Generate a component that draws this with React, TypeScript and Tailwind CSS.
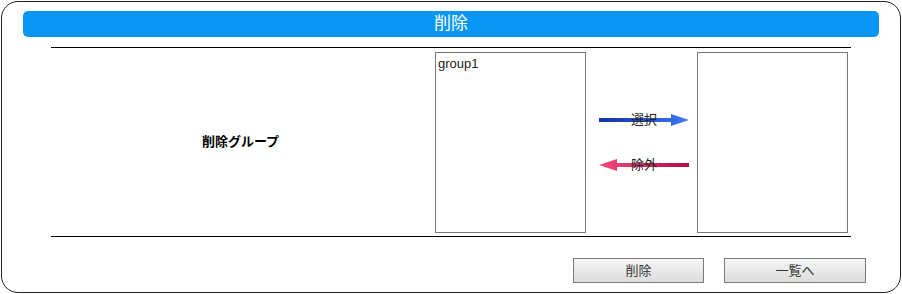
import React from 'react';

const jp = 'font-["Liberation_Sans","Noto_Sans_CJK_JP",sans-serif]';

// Horizontal arrow drawn with a gradient shaft and triangular head
const Arrow: React.FC<{ dir: 'right' | 'left'; label: string }> = ({ dir, label }) => {
  const id = dir === 'right' ? 'gradR' : 'gradL';
  return (
    <div className="relative w-[90px] h-[16px] flex items-center justify-center">
      <svg width="90" height="16" viewBox="0 0 90 16" className="absolute inset-0">
        <defs>
          {dir === 'right' ? (
            <linearGradient id={id} gradientUnits="userSpaceOnUse" x1="0" x2="90" y1="0" y2="0">
              <stop offset="0" stopColor="#1430a8" />
              <stop offset="1" stopColor="#3b78f0" />
            </linearGradient>
          ) : (
            <linearGradient id={id} gradientUnits="userSpaceOnUse" x1="0" x2="90" y1="0" y2="0">
              <stop offset="0" stopColor="#f6497a" />
              <stop offset="1" stopColor="#b00c4b" />
            </linearGradient>
          )}
        </defs>
        {dir === 'right' ? (
          <>
            <rect x="0" y="6" width="74" height="4" fill={`url(#${id})`} />
            <polygon points="72,2 90,8 72,14" fill={`url(#${id})`} />
          </>
        ) : (
          <>
            <rect x="16" y="6" width="74" height="4" fill={`url(#${id})`} />
            <polygon points="18,2 0,8 18,14" fill={`url(#${id})`} />
          </>
        )}
      </svg>
      <span className={`relative text-[13px] text-[#222] leading-none ${jp}`}>{label}</span>
    </div>
  );
};

const Btn: React.FC<{ label: string; w: string }> = ({ label, w }) => (
  <button
    className={`${w} h-[25px] border border-[#7a7a7a] bg-gradient-to-b from-[#f6f6f6] to-[#dcdcdc] text-[13px] text-[#333] ${jp}`}
  >
    {label}
  </button>
);

export default function App() {
  return (
    <div className="w-[902px] h-[294px] bg-white p-px">
      <div className="w-full h-full border-[1.5px] border-[#222] rounded-[17px] flex flex-col pt-[9px] px-[21px]">
        {/* Header */}
        <div
          className={`h-[26px] rounded-[5px] bg-[#0a96f6] text-white text-[17px] flex items-center justify-center ${jp}`}
        >
          削除
        </div>

        {/* Form table */}
        <div className="mt-[10px] mx-auto w-[800px] h-[190px] border-t border-b border-black flex items-center">
          <div className={`w-[379px] mr-[5px] text-center text-[13px] font-bold text-black ${jp}`}>削除グループ</div>
          <div className="w-[151px] h-[181px] border border-[#777] px-[2px] pt-[1px]">
            <div className="text-[13px] text-[#222] font-['Liberation_Sans',sans-serif]">group1</div>
          </div>
          <div className="w-[111px] flex flex-col items-center gap-[29px] pl-[5px]">
            <Arrow dir="right" label="選択" />
            <Arrow dir="left" label="除外" />
          </div>
          <div className="w-[151px] h-[181px] border border-[#777]" />
        </div>

        {/* Buttons */}
        <div className="flex justify-end gap-[20px] mt-[21px] pr-[13px]">
          <Btn label="削除" w="w-[131px]" />
          <Btn label="一覧へ" w="w-[142px]" />
        </div>
      </div>
    </div>
  );
}
